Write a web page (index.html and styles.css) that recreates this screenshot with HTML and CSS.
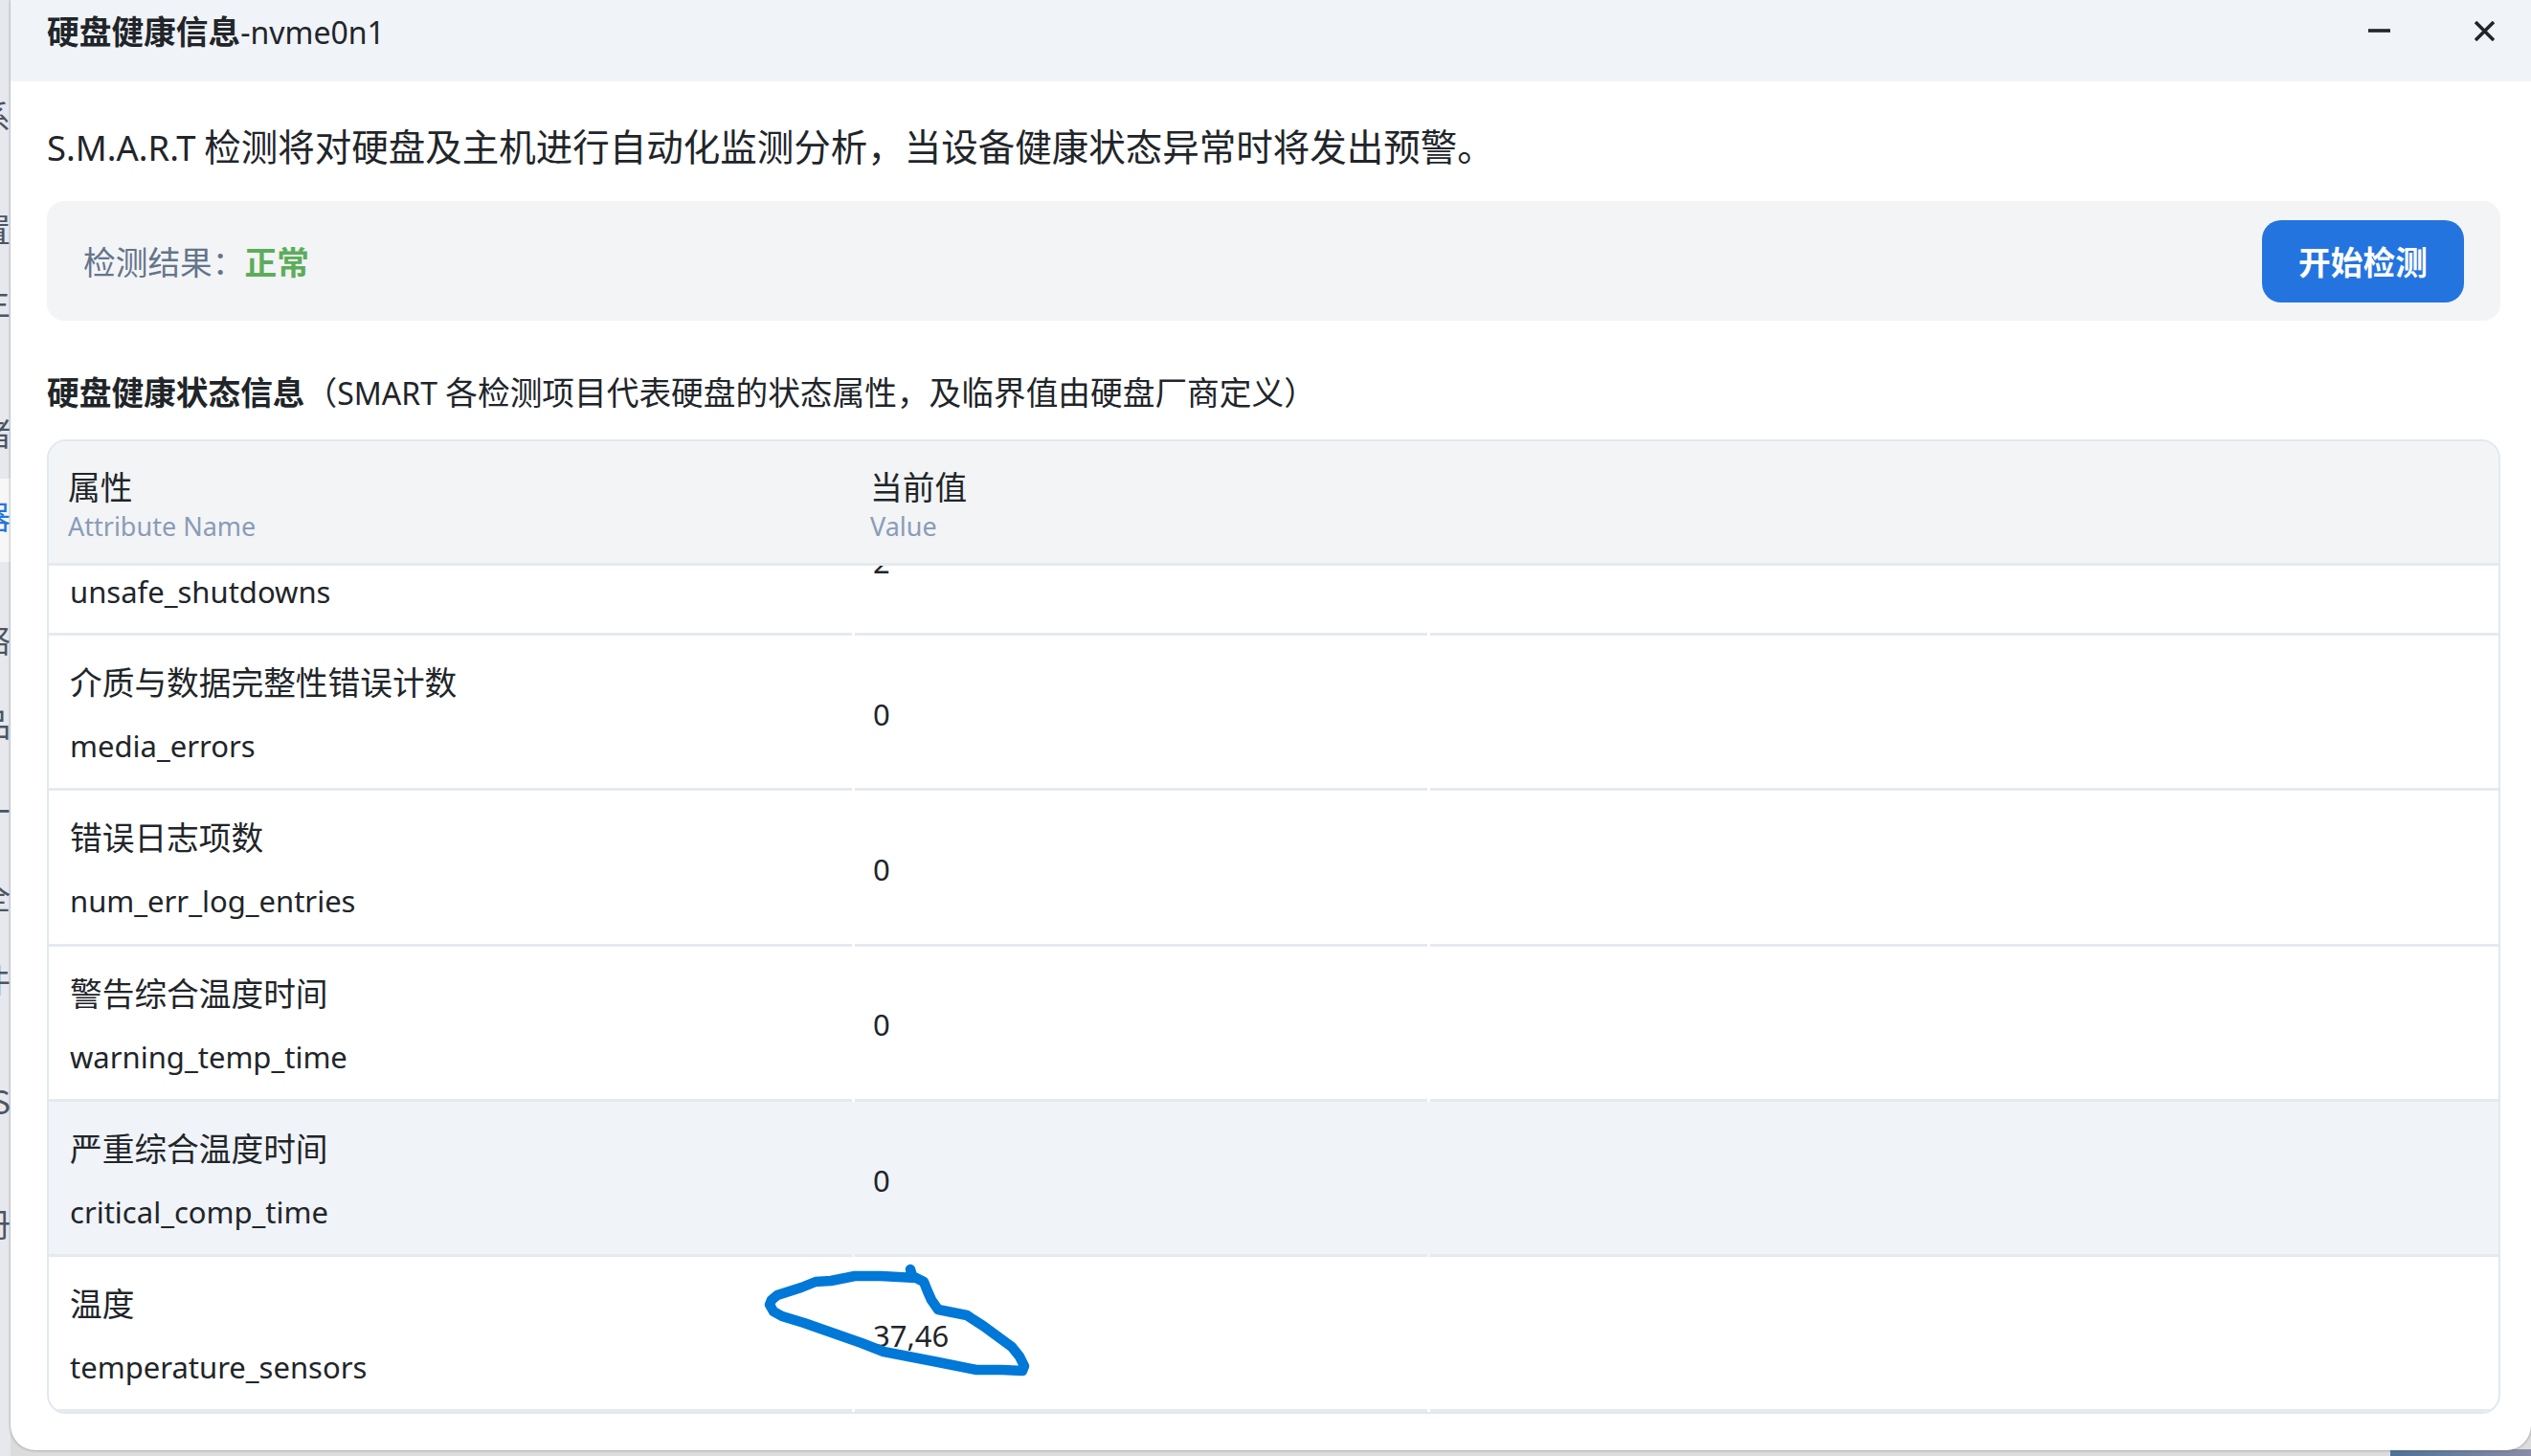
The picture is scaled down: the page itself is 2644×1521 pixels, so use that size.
FILE: index.html
```html
<!DOCTYPE html>
<html lang="zh">
<head>
<meta charset="utf-8">
<title>硬盘健康信息</title>
<link rel="stylesheet" href="styles.css">
</head>
<body>
<div class="desktop">
  <div class="sidebar">
    <div class="active-band"></div>
    <span class="s1">系</span><span class="s2">置</span><span class="s3">主</span><span class="s4">诸</span>
    <span class="s5 active">器</span><span class="s6">络</span><span class="s7">品</span><span class="s8">十</span>
    <span class="s9">全</span><span class="s10">件</span><span class="s11">S</span><span class="s12">册</span>
  </div>
  <div class="wallpaper"></div>
  <section class="window">
    <header class="titlebar">
      <h1 class="title"><b>硬盘健康信息</b><span class="lat">-nvme0n1</span></h1>
      <div class="controls">
        <svg class="icon min" viewBox="0 0 23 8"><path d="M0 4H23" /></svg>
        <svg class="icon close" viewBox="0 0 21 21"><path d="M1 1L20 20M20 1L1 20" /></svg>
      </div>
    </header>
    <div class="body">
      <p class="intro"><span class="lat-intro">S.M.A.R.T</span> 检测将对硬盘及主机进行自动化监测分析，当设备健康状态异常时将发出预警。</p>
      <div class="result">
        <div class="result-text">检测结果：<strong class="ok">正常</strong></div>
        <button class="start">开始检测</button>
      </div>
      <h2 class="section"><b>硬盘健康状态信息</b>（<span class="lat">SMART </span>各检测项目代表硬盘的状态属性，及临界值由硬盘厂商定义）</h2>
      <div class="table">
        <div class="row head">
          <div class="cell name"><div class="zh">属性</div><div class="en">Attribute Name</div></div>
          <div class="cell val"><div class="zh">当前值</div><div class="en">Value</div></div>
          <div class="cell"></div>
        </div>
        <div class="scroll">
          <div class="row partial">
            <div class="cell name"><div class="key">unsafe_shutdowns</div></div>
            <div class="cell val"><div class="clipped">2</div></div>
            <div class="cell"></div>
          </div>
          <div class="row">
            <div class="cell name"><div class="label">介质与数据完整性错误计数</div><div class="key">media_errors</div></div>
            <div class="cell val">0</div>
            <div class="cell"></div>
          </div>
          <div class="row">
            <div class="cell name"><div class="label">错误日志项数</div><div class="key">num_err_log_entries</div></div>
            <div class="cell val">0</div>
            <div class="cell"></div>
          </div>
          <div class="row">
            <div class="cell name"><div class="label">警告综合温度时间</div><div class="key">warning_temp_time</div></div>
            <div class="cell val">0</div>
            <div class="cell"></div>
          </div>
          <div class="row hover">
            <div class="cell name"><div class="label">严重综合温度时间</div><div class="key">critical_comp_time</div></div>
            <div class="cell val">0</div>
            <div class="cell"></div>
          </div>
          <div class="row">
            <div class="cell name"><div class="label">温度</div><div class="key">temperature_sensors</div></div>
            <div class="cell val">37,46</div>
            <div class="cell"></div>
          </div>
        </div>
      </div>
    </div>
  </section>
  <svg class="scribble" viewBox="0 0 2644 1521" width="2644" height="1521"><path d="M951 1326L953 1333L965 1339L969 1349L973 1358L980 1368L995 1371L1010 1374L1027 1385L1042 1396L1057 1407L1065 1417L1070 1427L1068 1432L1047 1431L1020 1431L980 1423L923 1412L900 1403L840 1382L817 1375L808 1370L804 1363L806 1358L812 1353L837 1345L852 1339L868 1338L893 1333L920 1333L957 1335" /></svg>
</div>
</body>
</html>
```
FILE: styles.css
```css
* { box-sizing: border-box; }
html, body { margin: 0; padding: 0; width: 2644px; height: 1521px; overflow: hidden; }
body { font-family: "Noto Sans CJK SC", "Noto Sans", sans-serif; color: #212529; }
.desktop { position: relative; width: 2644px; height: 1521px; background: #dcdcdc; overflow: hidden; }
.sidebar { position: absolute; left: 0; top: 0; width: 11px; height: 1521px; background: #e6e8ed; overflow: hidden; font-family: "Noto Sans CJK SC", sans-serif; font-size: 34px; color: #4b5563; }
.sidebar span { position: absolute; right: 0; line-height: 40px; white-space: nowrap; }
.active-band { position: absolute; left: 0; top: 500px; width: 100%; height: 87px; background: #f7f7f8; }
.s1 { top: 101px; } .s2 { top: 219px; } .s3 { top: 295px; } .s4 { top: 432px; }
.s5 { top: 519px; } .s6 { top: 648px; } .s7 { top: 736px; } .s8 { top: 828px; }
.s9 { top: 916px; } .s10 { top: 1003px; } .s11 { top: 1130px; } .s12 { top: 1258px; }
.sidebar .active { color: #2474e0; }
.wallpaper { position: absolute; left: 2497px; top: 1514px; width: 147px; height: 7px; background: linear-gradient(90deg, #4e7295, #8a8ca8); }
.window { position: absolute; left: 11px; top: 0; width: 2633px; height: 1515px; background: #fff; border-radius: 0 0 26px 26px; box-shadow: 0 0 3px rgba(60, 60, 70, .55); display: flex; flex-direction: column; overflow: hidden; }
.titlebar { height: 85px; flex: none; background: #f0f3f8; display: flex; align-items: center; justify-content: space-between; padding: 0 38px 0 38px; }
.title { margin: 0 0 19px; font-size: 33.7px; font-weight: 400; line-height: 48px; }
.title b { font-weight: 700; }
.lat { font-family: "Noto Sans", sans-serif; font-size: 32px; }
.lat-intro { font-family: "Noto Sans", sans-serif; font-size: 36.4px; }
.controls { display: flex; align-items: center; gap: 88px; margin-bottom: 21px; }
.icon { display: block; fill: none; stroke: #212529; stroke-width: 3.6; }
.min { width: 23px; height: 8px; }
.close { width: 21px; height: 21px; }
.body { padding: 0 32px 0 38px; flex: 1; min-height: 0; }
.intro { margin: 0; padding-top: 41px; height: 125px; font-size: 38.5px; line-height: 50px; white-space: nowrap; }
.result { height: 125px; background: #f3f4f6; border-radius: 18px; display: flex; align-items: center; justify-content: space-between; padding: 0 38px; }
.result-text { font-size: 33.7px; color: #64748b; }
.ok { color: #5cad5a; font-weight: 700; }
.start { width: 211px; height: 86px; border: 0; border-radius: 20px; background: #2474e0; color: #fff; font: 700 33.7px "Noto Sans CJK SC", sans-serif; padding: 0; }
.section { margin: 0; height: 124px; padding-top: 49px; font-size: 33.7px; line-height: 50px; font-weight: 400; white-space: nowrap; }
.section b { font-weight: 700; }
.table { height: 1018px; border: 2px solid #e2e8f0; border-radius: 20px; overflow: hidden; display: flex; flex-direction: column; }
.row { display: grid; grid-template-columns: 839px 598px 1fr; column-gap: 3px; flex: none; height: 162.3px; }
.cell { padding: 4px 0 0 22px; display: flex; flex-direction: column; justify-content: center; font-family: "Noto Sans", sans-serif; font-size: 31px; border-bottom: 3px solid #e5e9f0; }
.val { padding-left: 19px; }
.head { background: #f3f4f6; height: 130px; display: flex; border-bottom: 3px solid #e5e9f0; }
.head .cell { border-bottom: 0; padding: 4px 0 0 20px; }
.head .name { width: 839px; flex: none; }
.head .val { padding-left: 16px; }
.head .zh { font-family: "Noto Sans CJK SC", sans-serif; font-size: 33.7px; line-height: 46px; }
.head .en { font-size: 27px; line-height: 38px; color: #8a9cb8; }
.scroll { flex: 1; overflow: hidden; }
.partial { height: 73px; }
.partial .cell { padding-top: 0; }
.partial .key { line-height: 48px; margin-top: -16px; }
.clipped { margin-top: -78px; line-height: 48px; }
.label { font-family: "Noto Sans CJK SC", sans-serif; font-size: 33.7px; line-height: 48px; margin-bottom: 19px; }
.key { line-height: 48px; }
.hover { background: #f0f3f8; }
.scribble { position: absolute; left: 0; top: 0; fill: none; stroke: #0078d7; stroke-width: 10.5; stroke-linecap: round; stroke-linejoin: round; }
```
